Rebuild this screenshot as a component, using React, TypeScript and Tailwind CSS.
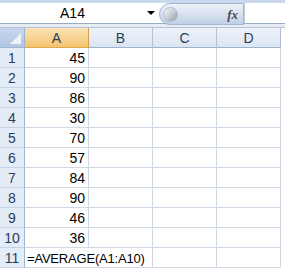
const values = [45, 90, 86, 30, 70, 57, 84, 90, 46, 36];
const cols = ["A", "B", "C", "D"];

function HeaderCell({ label, active }: { label: string; active?: boolean }) {
  return (
    <div
      className={
        "w-[64px] h-full flex items-center justify-center border-r border-b " +
        (active
          ? "bg-gradient-to-b from-[#fbe2b4] to-[#f3c56e] border-[#c9a25a] border-b-[#e0a84a]"
          : "bg-gradient-to-b from-[#eef3fa] to-[#dbe4f1] border-[#b1c0d6] border-b-[#9eb2cd]")
      }
    >
      {label}
    </div>
  );
}

function Row({ n, children }: { n: number; children?: React.ReactNode }) {
  return (
    <div className="flex h-[20px]">
      <div className="w-[25px] shrink-0 flex items-center justify-center bg-[#e4ecf7] border-r border-b border-r-[#9eb6ce] border-b-[#c5d3e6] text-[#2c3e57] text-[14px]">
        {n}
      </div>
      {children}
    </div>
  );
}

export default function App() {
  return (
    <div
      className="w-[285px] h-[269px] overflow-hidden bg-white text-[13px] leading-none text-black"
      style={{ fontFamily: '"Liberation Sans", Arial, sans-serif' }}
    >
      <div className="h-[3px] bg-[#c9d8ec]" />
      {/* formula bar */}
      <div className="flex h-[21px] border-b border-[#9aabc3]">
        <div className="w-[159px] flex items-center bg-white">
          <div className="flex-1 text-center pl-[2px] text-[14px]">A14</div>
          <div className="w-[16px] flex items-center justify-center">
            <div className="w-0 h-0 border-l-[4px] border-r-[4px] border-t-[4px] border-l-transparent border-r-transparent border-t-black" />
          </div>
        </div>
        <div className="w-[85px] h-[22px] flex items-center justify-between rounded-l-full border border-[#a3b6d1] bg-gradient-to-b from-[#edf2f9] via-[#d8e2f0] to-[#bfcfe5] pl-[3px] pr-[5px]">
          <div className="w-[15px] h-[15px] rounded-full bg-gradient-to-br from-[#f7f8fa] via-[#c9cfd7] to-[#8f9aa8] border border-[#b3bfce]" />
          <span
            className="italic font-bold text-[13px] text-[#4a4a4a]"
            style={{ fontFamily: '"Liberation Serif", serif' }}
          >
            fx
          </span>
        </div>
        <div className="flex-1 bg-white border-l border-[#c3cedd]" />
      </div>
      <div className="h-[4px] bg-[#e8edf4] border-b border-[#b4c3d8]" />
      {/* column headers */}
      <div className="flex h-[20px] text-[#2c3e57] text-[14px]">
        <div className="w-[25px] h-full bg-gradient-to-b from-[#c7d7ed] to-[#b0c6e4] border-r border-b border-[#9eb6ce] flex items-end justify-end p-[3px]">
          <div
            className="w-0 h-0"
            style={{ borderBottom: "11px solid #eef3fa", borderLeft: "11px solid transparent" }}
          />
        </div>
        {cols.map((c) => (
          <HeaderCell key={c} label={c} active={c === "A"} />
        ))}
      </div>
      {values.map((v, i) => (
        <Row key={i} n={i + 1}>
          <div className="w-[64px] flex items-center justify-end pr-[3px] border-r border-b border-[#d0d7e5] text-[14px]">
            {v}
          </div>
          <div className="w-[64px] border-r border-b border-[#d0d7e5]" />
          <div className="w-[64px] border-r border-b border-[#d0d7e5]" />
          <div className="w-[64px] border-r border-b border-[#d0d7e5]" />
        </Row>
      ))}
      <Row n={11}>
        <div className="w-[256px] relative flex items-center border-b border-[#d0d7e5]">
          <div className="flex">
            <div className="w-[64px] h-[20px]" />
            <div className="w-[64px] h-[20px] border-r border-[#d0d7e5]" />
            <div className="w-[64px] h-[20px] border-r border-[#d0d7e5]" />
            <div className="w-[64px] h-[20px] border-r border-[#d0d7e5]" />
          </div>
          <span className="absolute left-[2px] top-[4px] bg-white pr-[1px] tracking-[-0.2px]">=AVERAGE(A1:A10)</span>
        </div>
      </Row>
    </div>
  );
}
